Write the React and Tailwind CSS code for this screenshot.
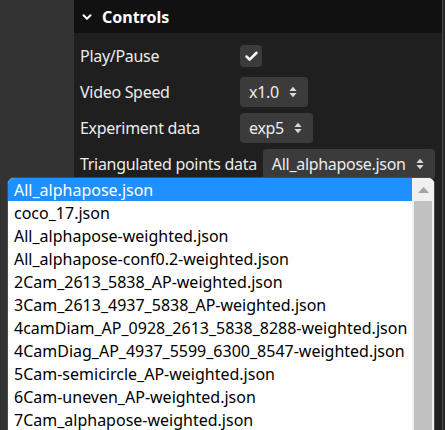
import React from 'react';
import { Check, ChevronDown } from 'lucide-react';

const files = [
  'All_alphapose.json',
  'coco_17.json',
  'All_alphapose-weighted.json',
  'All_alphapose-conf0.2-weighted.json',
  '2Cam_2613_5838_AP-weighted.json',
  '3Cam_2613_4937_5838_AP-weighted.json',
  '4camDiam_AP_0928_2613_5838_8288-weighted.json',
  '4CamDiag_AP_4937_5599_6300_8547-weighted.json',
  '5Cam-semicircle_AP-weighted.json',
  '6Cam-uneven_AP-weighted.json',
  '7Cam_alphapose-weighted.json',
];

function UpDown() {
  return (
    <svg width="8" height="12" viewBox="0 0 8 12" className="shrink-0">
      <path d="M4 0.8 L7.6 5 H0.4 Z" fill="#d8d8d8" />
      <path d="M4 11.2 L7.6 7 H0.4 Z" fill="#d8d8d8" />
    </svg>
  );
}

function Select({ value }) {
  return (
    <div className="h-[30px] shrink-0 flex items-center gap-[10px] pl-[9px] pr-[11px] bg-[#3b3b3b] rounded-[4px] text-[#ececec] whitespace-nowrap tracking-[-0.3px]">
      <span>{value}</span>
      <UpDown />
    </div>
  );
}

function Row({ label, children }) {
  return (
    <div className="h-[30px] flex items-center gap-[6px]">
      <span className="min-w-[154px] whitespace-nowrap text-[#ececec] tracking-[-0.3px]">{label}</span>
      {children}
    </div>
  );
}

export default function App() {
  return (
    <div className="w-[445px] h-[430px] relative overflow-hidden bg-[#333333] flex text-[16px]" style={{ fontFamily: '"Noto Sans", sans-serif' }}>
      <div className="w-[74px] shrink-0" />
      <div className="flex-1 min-w-0 bg-[#1f1f1f] flex flex-col">
        <div className="h-[33px] bg-[#111111] flex items-center gap-[8px] pl-[6px] font-bold text-white">
          <ChevronDown size={14} strokeWidth={3.5} />
          <span>Controls</span>
        </div>
        <div className="flex flex-col gap-[6px] pt-[8px] pl-[6px]">
          <Row label="Play/Pause">
            <div className="w-[22px] h-[22px] rounded-[4px] bg-[#3b3b3b] flex items-center justify-center text-white">
              <Check size={15} strokeWidth={4} />
            </div>
          </Row>
          <Row label="Video Speed"><Select value="x1.0" /></Row>
          <Row label="Experiment data"><Select value="exp5" /></Row>
          <Row label="Triangulated points data"><Select value="All_alphapose.json" /></Row>
        </div>
      </div>
      <div className="w-[3px] shrink-0 border-l border-[#4a4a4a] bg-[#262626]" />

      {/* open select list */}
      <div className="absolute left-[7px] top-[177px] w-[428px] h-[270px] rounded-t-[7px] border border-[#4b4b4b] bg-white flex overflow-hidden">
        <div className="flex-1 flex flex-col">
          {files.map((f, i) => (
            <div key={f} className={`h-[23px] flex items-center pl-[6px] whitespace-nowrap ${i === 0 ? 'bg-[#1e90ff] text-white' : 'text-black'}`}>
              {f}
            </div>
          ))}
        </div>
        <div className="w-[22px] bg-[#f0f0f0] flex flex-col">
          <div className="h-[23px] flex items-center justify-center">
            <svg width="11" height="6" viewBox="0 0 11 6"><path d="M5.5 0 L11 6 H0 Z" fill="#a3a3a3" /></svg>
          </div>
          <div className="flex-1 mx-[2px] bg-[#c1c1c1]" />
        </div>
      </div>
    </div>
  );
}
